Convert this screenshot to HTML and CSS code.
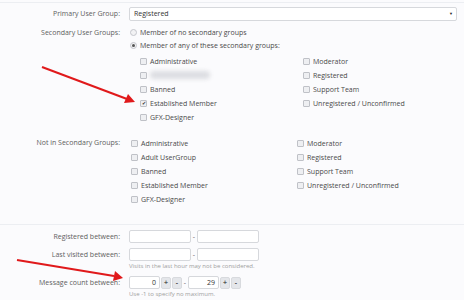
FILE: index.html
```html
<!DOCTYPE html>
<html lang="en">
<head>
<meta charset="UTF-8">
<title>User Search</title>
<link rel="stylesheet" href="styles.css">
</head>
<body>
<div class="form">
    <div class="row primary">
        <div class="lbl">Primary User Group:</div>
        <div class="val">
            <div class="select">Registered<span class="caret">&#9660;</span></div>
        </div>
    </div>

    <div class="row secondary">
        <div class="lbl">Secondary User Groups:</div>
        <div class="val">
            <div class="radio-line"><span class="radio"></span>Member of no secondary groups</div>
            <div class="radio-line"><span class="radio on"></span>Member of any of these secondary groups:</div>
            <div class="groups indent">
                <div class="chk"><span class="box"></span>Administrative</div>
                <div class="chk"><span class="box"></span>Moderator</div>
                <div class="chk"><span class="box"></span><span class="blurred"></span></div>
                <div class="chk"><span class="box"></span>Registered</div>
                <div class="chk"><span class="box"></span>Banned</div>
                <div class="chk"><span class="box"></span>Support Team</div>
                <div class="chk"><span class="box on">&#10004;</span>Established Member</div>
                <div class="chk"><span class="box"></span>Unregistered / Unconfirmed</div>
                <div class="chk"><span class="box"></span>GFX-Designer</div>
            </div>
        </div>
    </div>

    <div class="row notin">
        <div class="lbl">Not in Secondary Groups:</div>
        <div class="val">
            <div class="groups wide">
                <div class="chk"><span class="box"></span>Administrative</div>
                <div class="chk"><span class="box"></span>Moderator</div>
                <div class="chk"><span class="box"></span>Adult UserGroup</div>
                <div class="chk"><span class="box"></span>Registered</div>
                <div class="chk"><span class="box"></span>Banned</div>
                <div class="chk"><span class="box"></span>Support Team</div>
                <div class="chk"><span class="box"></span>Established Member</div>
                <div class="chk"><span class="box"></span>Unregistered / Unconfirmed</div>
                <div class="chk"><span class="box"></span>GFX-Designer</div>
            </div>
        </div>
    </div>

    <div class="divider"></div>

    <div class="row range">
        <div class="lbl">Registered between:</div>
        <div class="val">
            <div class="pair"><span class="inp"></span><span class="dash">-</span><span class="inp"></span></div>
        </div>
    </div>

    <div class="row range">
        <div class="lbl">Last visited between:</div>
        <div class="val">
            <div class="pair"><span class="inp"></span><span class="dash">-</span><span class="inp"></span></div>
            <div class="hint">Visits in the last hour may not be considered.</div>
        </div>
    </div>

    <div class="row range">
        <div class="lbl">Message count between:</div>
        <div class="val">
            <div class="pair">
                <span class="inp num">0</span><span class="btn">+</span><span class="btn">-</span>
                <span class="dash">-</span>
                <span class="inp num">29</span><span class="btn">+</span><span class="btn">-</span>
            </div>
            <div class="hint">Use -1 to specify no maximum.</div>
        </div>
    </div>
</div>

<svg class="arrows" width="464" height="300" viewBox="0 0 464 300">
    <g stroke="#e0191b" stroke-width="2" fill="#e0191b">
        <line x1="42" y1="67" x2="127" y2="99" />
        <polygon points="135,102 124,103 128,94" stroke="none" />
        <line x1="17" y1="260" x2="114" y2="276" />
        <polygon points="123,278 113,281 115,271" stroke="none" />
    </g>
</svg>
</body>
</html>
```

FILE: styles.css
```css
body {
    margin: 0;
    background: #fbfbfd;
    font-family: "Open Sans", "Liberation Sans", sans-serif;
    font-size: 7px;
    color: #4a4a4a;
    width: 464px;
    height: 300px;
    overflow: hidden;
    position: relative;
}
.form {
    margin-top: 2px;
    border-top: 1px solid #eceef2;
}
.row {
    display: flex;
}
.lbl {
    width: 129px;
    flex: none;
    text-align: right;
    color: #606060;
    padding-right: 9px;
    box-sizing: border-box;
    line-height: 13px;
}
.val {
    flex: 1;
}
.primary {
    margin-top: 4px;
    align-items: center;
}
.primary .lbl {
    line-height: 14px;
}
.select {
    width: 328px;
    height: 14px;
    box-sizing: border-box;
    border: 1px solid #d6d8dc;
    border-radius: 2px;
    background: #fff;
    line-height: 12px;
    padding-left: 4px;
    color: #333;
    display: flex;
    justify-content: space-between;
}
.caret {
    font-size: 4px;
    padding-right: 3px;
    color: #222;
}
.secondary {
    margin-top: 5px;
}
.radio-line {
    line-height: 13px;
    display: flex;
    align-items: center;
}
.radio {
    width: 5px;
    height: 5px;
    border: 1px solid #c4c6cc;
    border-radius: 50%;
    background: #f2f2f4;
    margin: 0 3px 0 1px;
    position: relative;
}
.radio.on::after {
    content: "";
    position: absolute;
    left: 1px;
    top: 1px;
    width: 3px;
    height: 3px;
    border-radius: 50%;
    background: #555;
}
.groups {
    display: grid;
    grid-template-columns: 163px 1fr;
}
.indent {
    margin-top: 2px;
    margin-left: 11px;
}
.wide {
    margin-left: 2px;
    grid-template-columns: 166px 1fr;
}
.chk {
    height: 14px;
    display: flex;
    align-items: center;
    color: #4a4a4a;
}
.box {
    width: 5px;
    height: 5px;
    border: 1px solid #bfc1c7;
    border-radius: 1px;
    background: #eeeff2;
    margin-right: 3px;
    font-size: 5px;
    line-height: 5px;
    color: #333;
    text-align: center;
    flex: none;
}
.blurred {
    width: 60px;
    height: 8px;
    background: #dcdde2;
    border-radius: 4px;
    filter: blur(2px);
}
.notin {
    margin-top: 12px;
}
.divider {
    margin-top: 18px;
    border-top: 1px solid #eceef2;
}
.range {
    margin-top: 5px;
}
.pair {
    display: flex;
    align-items: center;
    height: 13px;
}
.inp {
    width: 62px;
    height: 13px;
    box-sizing: border-box;
    border: 1px solid #d6d8dc;
    border-radius: 2px;
    background: #fff;
}
.inp.num {
    width: 31px;
    text-align: right;
    padding-right: 3px;
    line-height: 11px;
    color: #333;
}
.dash {
    width: 6px;
    text-align: center;
    color: #666;
}
.btn {
    width: 8px;
    height: 10px;
    margin-left: 1px;
    border-radius: 2px;
    background: #e4e6ea;
    border: 1px solid #d8dade;
    text-align: center;
    line-height: 10px;
    font-weight: bold;
    color: #555;
}
.hint {
    font-size: 6px;
    color: #a0a0a0;
    line-height: 10px;
}
.arrows {
    position: absolute;
    left: 0;
    top: 0;
}
```
